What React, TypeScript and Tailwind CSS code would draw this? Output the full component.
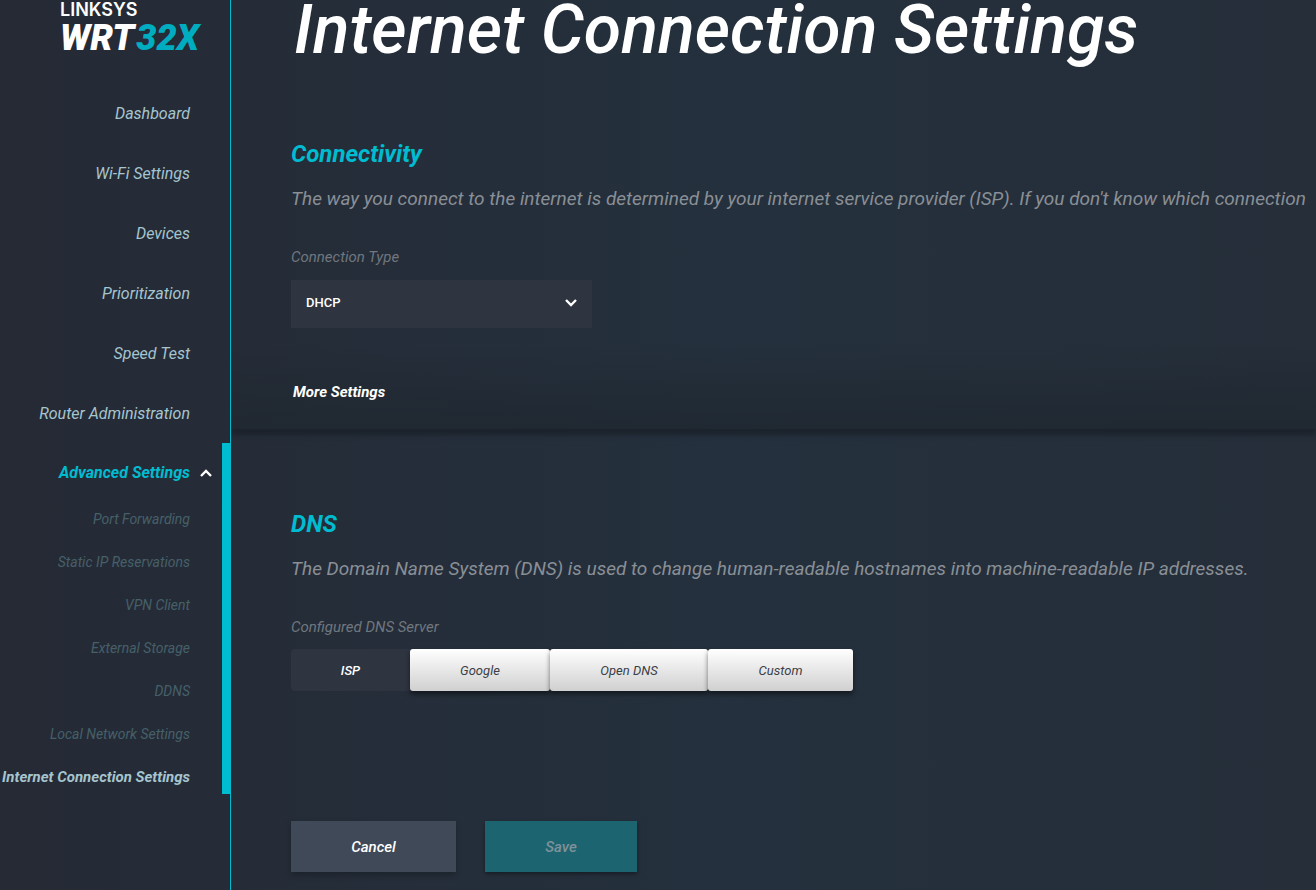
import { useState } from "react";

const links = ["Dashboard", "Wi-Fi Settings", "Devices", "Prioritization", "Speed Test", "Router Administration"];

const advancedLinks = [
  "Port Forwarding",
  "Static IP Reservations",
  "VPN Client",
  "External Storage",
  "DDNS",
  "Local Network Settings",
];

const dnsServers = [
  { label: "Google", width: "w-[140px]" },
  { label: "Open DNS", width: "w-[158px]" },
  { label: "Custom", width: "w-[145px]" },
];

function Chevron({ up = false }: { up?: boolean }) {
  return (
    <svg width="12" height="8" viewBox="0 0 12 8" fill="none" stroke="#fff" strokeWidth="2.4" aria-hidden="true">
      <path d={up ? "M1 7 6 2l5 5" : "M1 1l5 5 5-5"} />
    </svg>
  );
}

function Sidebar() {
  const [open, setOpen] = useState(true);
  return (
    <aside className="w-[231px] shrink-0 border-r border-[#00bcd1]">
      <a href="#home" className="flex h-[83px] flex-col pl-[60px] text-white">
        <span className="font-['Inter',sans-serif] text-[18px] leading-[20px] font-semibold not-italic">LINKSYS</span>
        <span className="flex gap-[2px] text-[36px] leading-[37px] font-black whitespace-nowrap">
          <span>WRT</span>
          <span className="text-[#00adc0]">32X</span>
        </span>
      </a>
      <nav>
        {links.map((label) => (
          <a
            key={label}
            href="#page"
            className="flex h-[60px] items-center justify-end pt-px pr-10 text-[16px] text-[#a5c5cf]"
          >
            {label}
          </a>
        ))}
        <div className="border-r-8 border-[#00bcd1]">
          <button
            type="button"
            aria-expanded={open}
            onClick={() => setOpen(!open)}
            className="flex h-[60px] w-full items-center justify-end gap-[10px] pr-[10px] text-[16px] font-bold text-[#00bcd1] italic"
          >
            Advanced Settings
            <Chevron up={open} />
          </button>
          {open && (
            <ul className="flex flex-col gap-[10px] pr-8 text-right text-[14px] leading-[33px] whitespace-nowrap">
              {advancedLinks.map((label) => (
                <li key={label}>
                  <a href="#page" className="block text-[#456069]">
                    {label}
                  </a>
                </li>
              ))}
              <li>
                <a href="#page" aria-current="page" className="block text-[15px] font-bold text-[#a5c5cf]">
                  Internet Connection Settings
                </a>
              </li>
            </ul>
          )}
        </div>
      </nav>
    </aside>
  );
}

export default function App() {
  return (
    <div className="flex min-h-screen overflow-hidden bg-linear-to-r from-[#252a35] via-[#24303d] via-55% to-[#252e39] font-['Roboto',sans-serif] italic">
      <Sidebar />
      <main className="min-w-0 flex-1 overflow-hidden">
        <section className="bg-linear-to-b from-transparent from-80% to-[#1e262e]/70 pb-[25px] pl-[60px] shadow-[0_6px_4px_#1c232c]">
          <h1 className="pl-[3px] text-[68px] leading-[60px] font-medium whitespace-nowrap text-white">
            Internet Connection Settings
          </h1>
          <h2 className="pt-[78px] text-[24px] leading-8 font-bold text-[#00bcd1]">Connectivity</h2>
          <p className="pt-[14px] text-[19px] leading-[30px] whitespace-nowrap text-[#8a8f96]">
            The way you connect to the internet is determined by your internet service provider (ISP). If you don't know
            which connection
          </p>
          <label htmlFor="connection-type" className="block pt-[31px] text-[15px] leading-6 text-[#70777f]">
            Connection Type
          </label>
          <div className="relative mt-[11px] w-[301px]">
            <select
              id="connection-type"
              className="h-12 w-full appearance-none bg-[#2e3440] pr-10 pb-[3px] pl-[15px] text-[13px] font-medium text-white not-italic"
            >
              <option>DHCP</option>
            </select>
            <span className="pointer-events-none absolute top-[19px] right-[15px]">
              <Chevron />
            </span>
          </div>
          <button type="button" className="mt-[52px] ml-[2px] block text-[15px] leading-6 font-bold text-white italic">
            More Settings
          </button>
        </section>
        <section className="pt-[79px] pl-[60px]">
          <h2 className="text-[24px] leading-8 font-bold text-[#00bcd1]">DNS</h2>
          <p className="pt-[14px] text-[19px] leading-[30px] whitespace-nowrap text-[#8a8f96]">
            The Domain Name System (DNS) is used to change human-readable hostnames into machine-readable IP addresses.
          </p>
          <h3 className="pt-[31px] text-[15px] leading-6 text-[#70777f]">Configured DNS Server</h3>
          <div className="mt-[10px] flex h-[42px] text-[13px]">
            <button
              type="button"
              aria-pressed="true"
              className="w-[119px] rounded-l-[4px] bg-[#2e3440] pt-px font-medium text-white italic"
            >
              ISP
            </button>
            {dnsServers.map(({ label, width }) => (
              <button
                key={label}
                type="button"
                aria-pressed="false"
                className={`${width} rounded-[3px] bg-linear-to-b from-white to-[#d0d0d0] pt-px text-[#3b3f48] italic shadow-[0_3px_5px_rgba(0,0,0,0.5)]`}
              >
                {label}
              </button>
            ))}
          </div>
          <div className="flex gap-[29px] pt-[130px] pb-[18px] text-[15px]">
            <button
              type="button"
              className="h-[51px] w-[165px] bg-[#404957] pt-px font-medium text-white italic shadow-[0_3px_6px_rgba(0,0,0,0.25)]"
            >
              Cancel
            </button>
            <button
              type="button"
              disabled
              className="h-[51px] w-[152px] bg-[#1d6471] pt-px font-medium text-[#7f9299] italic shadow-[0_2px_4px_rgba(0,0,0,0.4)]"
            >
              Save
            </button>
          </div>
        </section>
      </main>
    </div>
  );
}
